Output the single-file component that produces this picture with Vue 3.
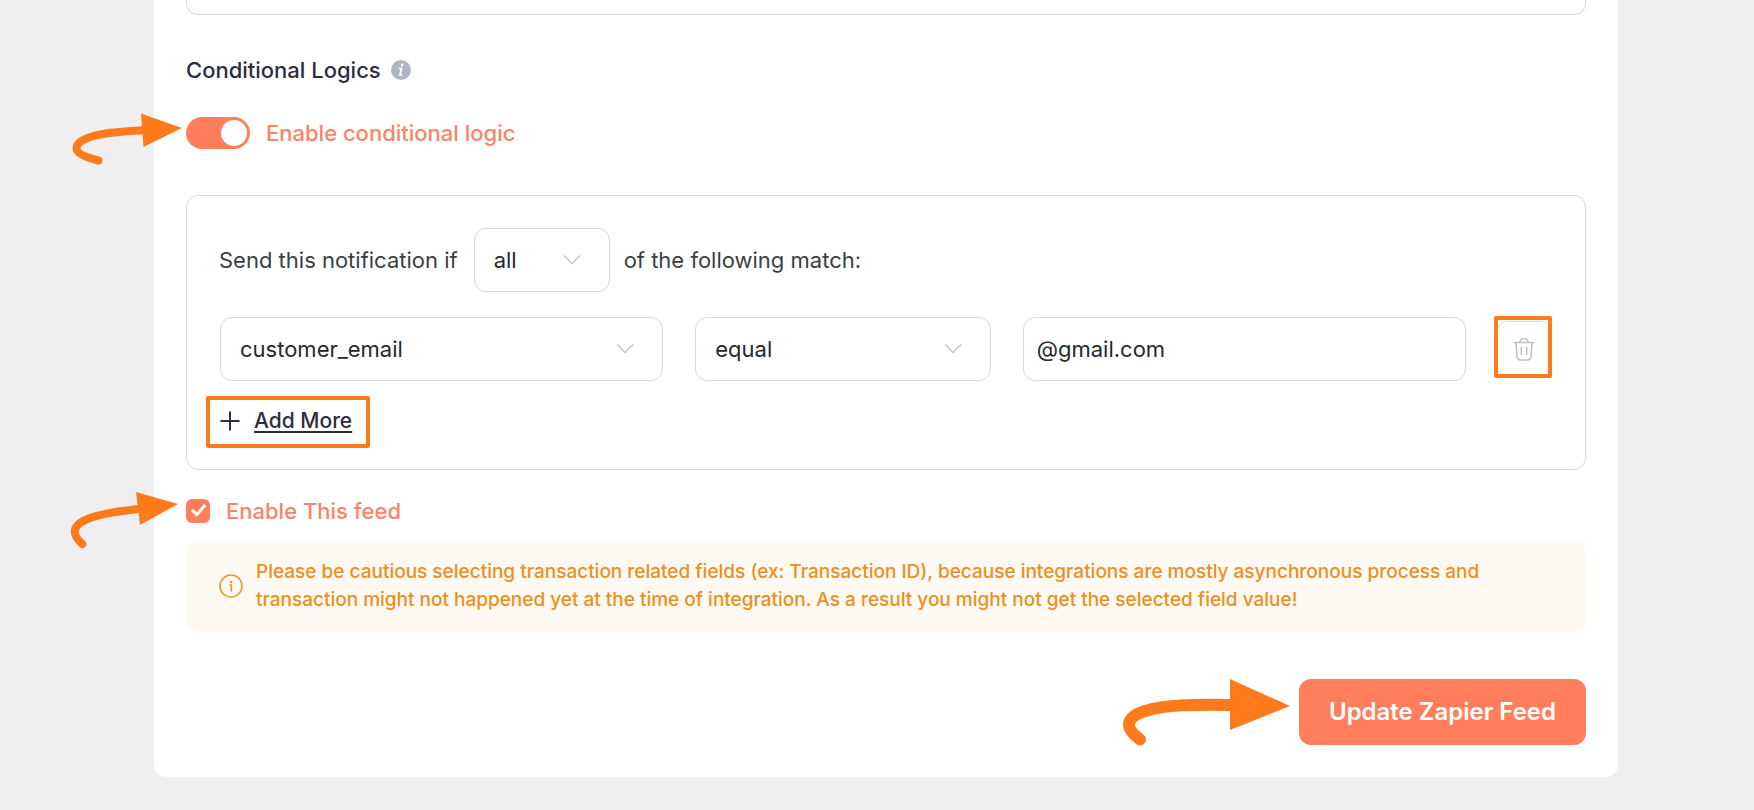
<script setup>
import { ref } from 'vue'

const logicEnabled = ref(true)
const feedEnabled = ref(true)
const matchType = ref('all')
const conditions = ref([{ id: 1, field: 'customer_email', operator: 'equal', value: '@gmail.com' }])

function addCondition() {
  conditions.value.push({ id: Date.now(), field: 'customer_email', operator: 'equal', value: '' })
}

function removeCondition(id) {
  conditions.value = conditions.value.filter((c) => c.id !== id)
}
</script>

<template>
  <main class="page">
    <form class="card" @submit.prevent>
      <div class="previous-panel"></div>

      <h2 class="heading">
        Conditional Logics
        <svg class="info" viewBox="0 0 20 20" aria-hidden="true">
          <circle cx="10" cy="10" r="10" fill="#b0b5c2" />
          <circle cx="11.2" cy="5" r="1.4" fill="#fff" />
          <path d="M7.800 8.300H10.500L9 14.800H11.300" fill="none" stroke="#fff" stroke-width="1.700" />
        </svg>
      </h2>

      <div class="toggle-row">
        <svg class="arrow arrow-toggle" viewBox="0 0 118 52" aria-hidden="true">
          <path class="shaft" d="M34.500 47.500C24 45 12.500 41 12.500 35.500C12.500 28 24 24 36 21.500C50 19 64 18 79 17.300" />
          <path class="head" d="M77 .5L118 15L79.500 34Z" />
        </svg>
        <input id="logic" v-model="logicEnabled" class="switch" type="checkbox" role="switch" />
        <label class="accent-label" for="logic">Enable conditional logic</label>
      </div>

      <section v-if="logicEnabled" class="logic">
        <div class="match-row">
          <label for="match">Send this notification if</label>
          <span class="select match-select">
            <select id="match" v-model="matchType">
              <option>all</option>
              <option>any</option>
            </select>
            <svg class="chevron" viewBox="0 0 18 12" aria-hidden="true"><path d="M1 1.500L9 9.500L17 1.500" /></svg>
          </span>
          <span>of the following match:</span>
        </div>

        <div v-for="c in conditions" :key="c.id" class="condition">
          <div class="fields">
            <span class="select">
              <select v-model="c.field" aria-label="Field">
                <option>customer_email</option>
                <option>customer_name</option>
              </select>
              <svg class="chevron" viewBox="0 0 18 12" aria-hidden="true"><path d="M1 1.500L9 9.500L17 1.500" /></svg>
            </span>
            <span class="select">
              <select v-model="c.operator" aria-label="Operator">
                <option>equal</option>
                <option>not equal</option>
              </select>
              <svg class="chevron" viewBox="0 0 18 12" aria-hidden="true"><path d="M1 1.500L9 9.500L17 1.500" /></svg>
            </span>
            <input v-model="c.value" class="value" type="text" aria-label="Value" />
          </div>
          <button class="remove" type="button" aria-label="Remove condition" @click="removeCondition(c.id)">
            <svg viewBox="0 0 22 24" aria-hidden="true">
              <path d="M1 5.500H21M3 5.500L4 19.500Q4.300 23 7.500 23H14.500Q17.700 23 18 19.500L19 5.500M7 5C7.500 2.500 9 1.500 11 1.500S14.500 2.500 15 5M8.300 10V18M13.700 10V18" />
            </svg>
          </button>
        </div>

        <button class="add" type="button" @click="addCondition">
          <svg viewBox="0 0 20 20" aria-hidden="true"><path d="M10 .5V19.500M.5 10H19.500" /></svg>
          <span>Add More</span>
        </button>
      </section>

      <div class="feed-row">
        <svg class="arrow arrow-feed" viewBox="0 0 116 56" aria-hidden="true">
          <path class="shaft" d="M20.300 52C16 48 12.700 44 12.700 39.700C12.700 33 20 29 28 26C42 21 58 19 76 17" />
          <path class="head" d="M74 0L116 12L78 33Z" />
        </svg>
        <input id="feed" v-model="feedEnabled" class="sr-check" type="checkbox" />
        <label class="accent-label feed-label" for="feed">
          <svg class="check-box" viewBox="0 0 24 24" aria-hidden="true">
            <rect width="24" height="24" rx="6" fill="#ff7f5c" />
            <path v-if="feedEnabled" d="M6 11L10.800 15.500L19.300 6" fill="none" stroke="#fff" stroke-width="3" />
          </svg>
          Enable This feed
        </label>
      </div>

      <div class="notice">
        <svg viewBox="0 0 24 24" aria-hidden="true">
          <circle cx="12" cy="12" r="11" fill="none" stroke="#ee9624" stroke-width="1.500" />
          <circle cx="12" cy="8" r="1.300" fill="#ee9624" />
          <path d="M10.500 11H12.300V17.500" fill="none" stroke="#ee9624" stroke-width="1.500" />
        </svg>
        <p>
          Please be cautious selecting transaction related fields (ex: Transaction ID), because integrations are mostly
          asynchronous process and transaction might not happened yet at the time of integration. As a result you might
          not get the selected field value!
        </p>
      </div>

      <div class="actions">
        <svg class="arrow-submit" viewBox="0 0 168 68" aria-hidden="true">
          <path class="shaft" d="M17 60.500C11 56 6 51 6 46C6 38 14 34.500 22 32C42 25.500 72 25.500 108 26" />
          <path class="head" d="M107 0L167 27L107 51Z" />
        </svg>
        <button class="submit" type="submit">Update Zapier Feed</button>
      </div>
    </form>
  </main>
</template>

<style>
body {
  background: #efefef;
}
</style>

<style scoped>
.page,
.page * {
  box-sizing: border-box;
}
.page {
  padding: 0 136px 32px 154px;
  font-family: Inter, "Liberation Sans", sans-serif;
  font-size: 22px;
  line-height: 32px;
  color: #3c3e42;
}
.card {
  padding: 0 32px 32px;
  background: #fff;
  border-radius: 0 0 12px 12px;
}
.previous-panel {
  height: 15px;
  border: 1px solid #d9d9db;
  border-top: 0;
  border-radius: 0 0 12px 12px;
}
.heading {
  display: flex;
  align-items: center;
  gap: 10px;
  margin: 39px 0 31px;
  font-size: 22px;
  font-weight: 500;
  color: #2c2e40;
}
.info {
  width: 20px;
  height: 20px;
}
.toggle-row {
  position: relative;
  display: flex;
  align-items: center;
  gap: 16px;
  margin-bottom: 46px;
}
.accent-label {
  font-weight: 500;
  color: #f98467;
}
.switch {
  appearance: none;
  display: flex;
  align-items: center;
  width: 64px;
  height: 32px;
  margin: 0;
  padding: 3px;
  border-radius: 16px;
  background: #c8c9cc;
}
.switch::before {
  content: "";
  width: 26px;
  height: 26px;
  border-radius: 50%;
  background: #fff;
}
.switch:checked {
  justify-content: flex-end;
  background: #ff7f5c;
}
.arrow,
.arrow-submit {
  position: absolute;
  overflow: visible;
}
.shaft {
  fill: none;
  stroke: #ff7a1a;
  stroke-width: 8;
  stroke-linecap: round;
}
.head {
  fill: #ff7a1a;
}
.arrow-toggle {
  left: -122px;
  top: -4px;
  width: 118px;
  height: 52px;
}
.arrow-feed {
  left: -124px;
  top: -7px;
  width: 116px;
  height: 56px;
}
.logic {
  padding: 32px 32px 21px;
  border: 1px solid #d9d9db;
  border-radius: 12px;
}
.match-row {
  display: flex;
  align-items: center;
  gap: 14px;
}
.select {
  position: relative;
  display: block;
}
.match-select {
  width: 136px;
  margin-left: 2px;
}
select,
.value {
  appearance: none;
  display: block;
  width: 100%;
  height: 64px;
  margin: 0;
  padding: 0 56px 0 19px;
  border: 1px solid #d9d9db;
  border-radius: 12px;
  background: #fff;
  font: inherit;
  color: #26282b;
}
.value {
  padding: 0 13px;
}
.chevron {
  position: absolute;
  right: 29px;
  top: 26px;
  width: 18px;
  height: 12px;
  fill: none;
  stroke: #c3c4c8;
  stroke-width: 1.3;
  pointer-events: none;
}
.condition {
  display: flex;
  align-items: center;
  gap: 30px;
  margin-top: 25px;
  padding: 0 1px;
}
.fields {
  flex: 1;
  display: grid;
  grid-template-columns: 3fr 2fr 3fr;
  gap: 32px;
}
.remove {
  position: relative;
  display: flex;
  align-items: center;
  justify-content: center;
  width: 56px;
  height: 56px;
  padding: 0;
  border: 1px solid #d9d9db;
  border-radius: 12px;
  background: #fff;
}
.remove::after {
  content: "";
  position: absolute;
  inset: -6px -1px -2px -3px;
  border: 4px solid #ff7a1a;
  border-radius: 2px;
}
.remove svg {
  width: 22px;
  height: 24px;
  fill: none;
  stroke: #bfc0c4;
  stroke-width: 1.5;
}
.add {
  display: flex;
  align-items: center;
  gap: 14px;
  height: 52px;
  margin: 15px 0 0 -13px;
  padding: 0 14px 2px 10px;
  border: 4px solid #ff7a1a;
  border-radius: 2px;
  background: none;
  font: inherit;
  font-size: 21px;
  font-weight: 500;
  color: #2c2e40;
}
.add span {
  text-decoration: underline;
  text-decoration-thickness: 2px;
  text-underline-offset: 3px;
}
.add svg {
  width: 20px;
  height: 20px;
  stroke: #2c2e40;
  stroke-width: 2;
}
.feed-row {
  position: relative;
  margin-top: 29px;
}
.sr-check {
  position: absolute;
  width: 24px;
  height: 24px;
  margin: 0;
  opacity: 0;
}
.feed-label {
  display: flex;
  align-items: center;
  gap: 16px;
  line-height: 24px;
}
.check-box {
  width: 24px;
  height: 24px;
}
.notice {
  display: flex;
  align-items: center;
  gap: 13px;
  margin-top: 18px;
  padding: 17px 33px;
  border-radius: 12px;
  background: #fff9f3;
  color: #ea9020;
  font-size: 19px;
  font-weight: 500;
  line-height: 28px;
}
.notice svg {
  flex: none;
  width: 24px;
  height: 24px;
}
.notice p {
  margin: 0;
}
.actions {
  position: relative;
  display: flex;
  justify-content: flex-end;
  margin-top: 48px;
}
.arrow-submit {
  right: 295px;
  top: 0;
  width: 168px;
  height: 68px;
}
.arrow-submit .shaft {
  stroke-width: 12;
}
.submit {
  height: 66px;
  padding: 0 30px;
  border: 0;
  border-radius: 12px;
  background: #ff7f5c;
  font: inherit;
  font-size: 24px;
  font-weight: 600;
  color: #fff;
}
</style>
